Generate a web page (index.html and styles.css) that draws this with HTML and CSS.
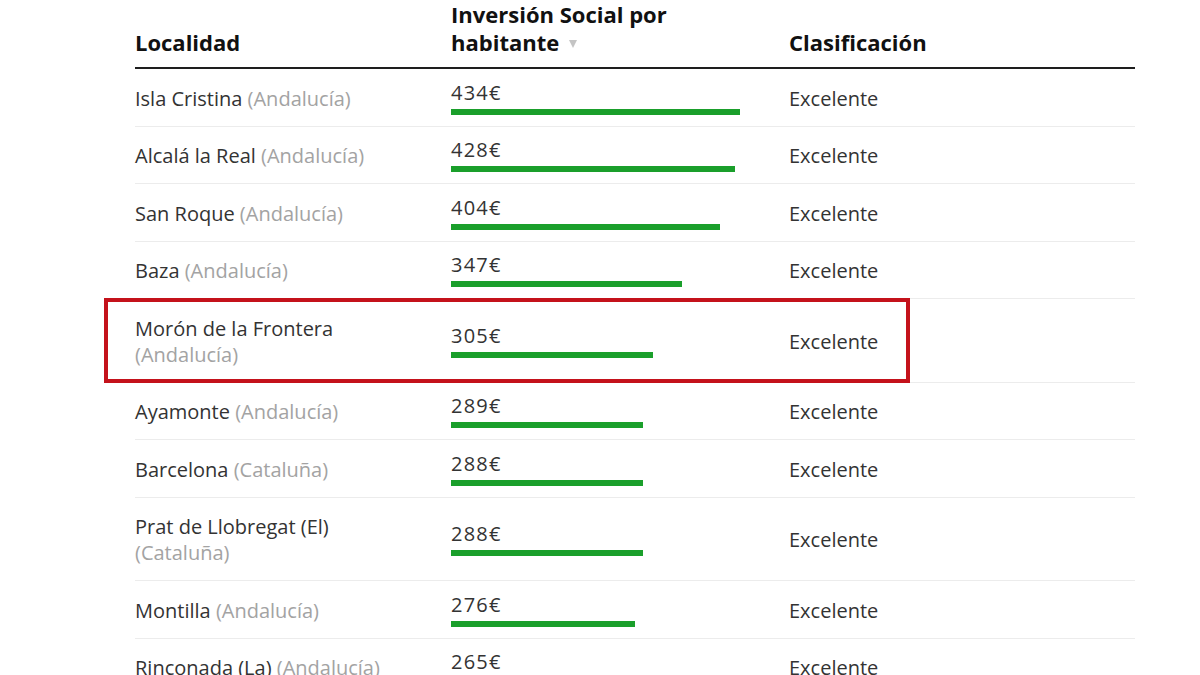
FILE: index.html
```html
<!DOCTYPE html>
<html lang="es">
<head>
<meta charset="utf-8">
<title>Inversión Social por habitante</title>
<link rel="stylesheet" href="styles.css">
</head>
<body>
<div class="table">
  <div class="head">
    <div class="th">Localidad</div>
    <div class="th">Inversión Social por<br>habitante <span class="sort"></span></div>
    <div class="th">Clasificación</div>
  </div>

  <div class="row">
    <div class="name">Isla Cristina <span class="reg">(Andalucía)</span></div>
    <div class="val"><div class="num">434€</div><div class="bar" style="width:289px"></div></div>
    <div class="cls">Excelente</div>
  </div>
  <div class="row">
    <div class="name">Alcalá la Real <span class="reg">(Andalucía)</span></div>
    <div class="val"><div class="num">428€</div><div class="bar" style="width:284px"></div></div>
    <div class="cls">Excelente</div>
  </div>
  <div class="row">
    <div class="name">San Roque <span class="reg">(Andalucía)</span></div>
    <div class="val"><div class="num">404€</div><div class="bar" style="width:269px"></div></div>
    <div class="cls">Excelente</div>
  </div>
  <div class="row">
    <div class="name">Baza <span class="reg">(Andalucía)</span></div>
    <div class="val"><div class="num">347€</div><div class="bar" style="width:231px"></div></div>
    <div class="cls">Excelente</div>
  </div>
  <div class="row highlight">
    <div class="name">Morón de la Frontera<br><span class="reg">(Andalucía)</span></div>
    <div class="val"><div class="num">305€</div><div class="bar" style="width:202px"></div></div>
    <div class="cls">Excelente</div>
  </div>
  <div class="row">
    <div class="name">Ayamonte <span class="reg">(Andalucía)</span></div>
    <div class="val"><div class="num">289€</div><div class="bar" style="width:192px"></div></div>
    <div class="cls">Excelente</div>
  </div>
  <div class="row">
    <div class="name">Barcelona <span class="reg">(Cataluña)</span></div>
    <div class="val"><div class="num">288€</div><div class="bar" style="width:192px"></div></div>
    <div class="cls">Excelente</div>
  </div>
  <div class="row">
    <div class="name">Prat de Llobregat (El)<br><span class="reg">(Cataluña)</span></div>
    <div class="val"><div class="num">288€</div><div class="bar" style="width:192px"></div></div>
    <div class="cls">Excelente</div>
  </div>
  <div class="row">
    <div class="name">Montilla <span class="reg">(Andalucía)</span></div>
    <div class="val"><div class="num">276€</div><div class="bar" style="width:184px"></div></div>
    <div class="cls">Excelente</div>
  </div>
  <div class="row">
    <div class="name">Rinconada (La) <span class="reg">(Andalucía)</span></div>
    <div class="val"><div class="num">265€</div><div class="bar" style="width:176px"></div></div>
    <div class="cls">Excelente</div>
  </div>
</div>
</body>
</html>
```

FILE: styles.css
```css
html, body {
  margin: 0;
  padding: 0;
  background: #fff;
  overflow: hidden;
}
body {
  font-family: "Open Sans", Roboto, "Liberation Sans", Arial, sans-serif;
  color: #333;
  font-size: 20px;
}
.table {
  width: 1000px;
  margin-left: 135px;
}
.head,
.row {
  display: grid;
  grid-template-columns: 316px 338px 346px;
  align-items: end;
}
.head {
  padding-bottom: 11px;
  border-bottom: 2px solid #1e1e1e;
}
.th {
  font-weight: 700;
  font-size: 22px;
  line-height: 28px;
  color: #111;
}
.sort {
  display: inline-block;
  width: 0;
  height: 0;
  margin-left: 4px;
  border-left: 4.5px solid transparent;
  border-right: 4.5px solid transparent;
  border-top: 8px solid #c4c4c4;
  vertical-align: 3px;
}
.row {
  align-items: center;
  padding: 16.75px 0 13.75px;
  border-bottom: 1px solid #ececec;
  position: relative;
}
.name {
  line-height: 26px;
}
.reg {
  color: #a3a3a3;
}
.val {
  margin: -4px 0 -3px;
}
.num {
  line-height: 22px;
  letter-spacing: 1.2px;
}
.bar {
  height: 6px;
  margin-top: 5px;
  background: #1a9f2b;
}
.cls {
  line-height: 26px;
}
.highlight::after {
  content: "";
  position: absolute;
  left: -31px;
  width: 806px;
  top: -1px;
  bottom: -1px;
  border: 4px solid #c4121b;
  box-sizing: border-box;
}
```
